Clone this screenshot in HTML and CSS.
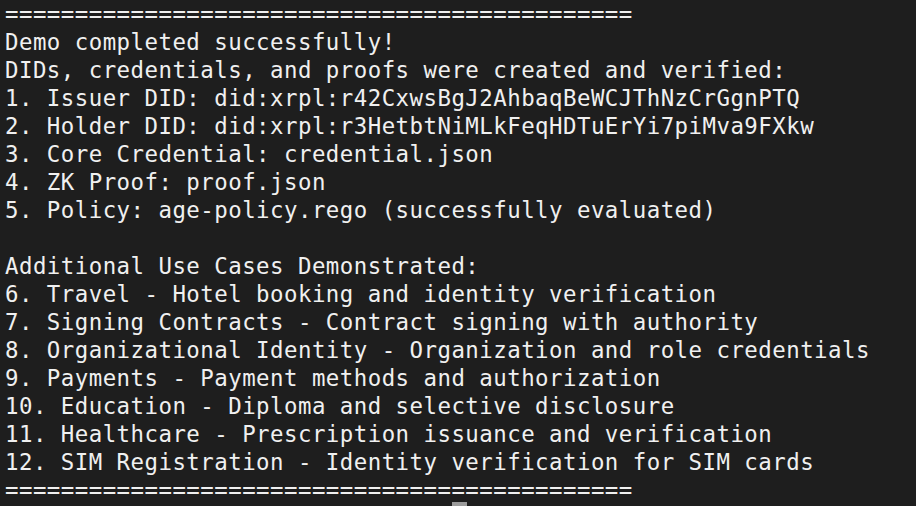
FILE: index.html
```html
<!DOCTYPE html>
<html>
<head>
<meta charset="utf-8">
<link rel="stylesheet" href="styles.css">
</head>
<body>
<pre class="term">=============================================
Demo completed successfully!
DIDs, credentials, and proofs were created and verified:
1. Issuer DID: did:xrpl:r42CxwsBgJ2AhbaqBeWCJThNzCrGgnPTQ
2. Holder DID: did:xrpl:r3HetbtNiMLkFeqHDTuErYi7piMva9FXkw
3. Core Credential: credential.json
4. ZK Proof: proof.json
5. Policy: age-policy.rego (successfully evaluated)

Additional Use Cases Demonstrated:
6. Travel - Hotel booking and identity verification
7. Signing Contracts - Contract signing with authority
8. Organizational Identity - Organization and role credentials
9. Payments - Payment methods and authorization
10. Education - Diploma and selective disclosure
11. Healthcare - Prescription issuance and verification
12. SIM Registration - Identity verification for SIM cards
=============================================</pre>
<div class="cursor-row"><span class="cursor"></span></div>
</body>
</html>
```
FILE: styles.css
```css
html, body {
  margin: 0;
  padding: 0;
  background: #1e1e1e;
  height: 100%;
  overflow: hidden;
}
.term {
  margin: 0;
  padding: 0 0 0 5px;
  font-family: "DejaVu Sans Mono", monospace;
  font-size: 22.4px;
  letter-spacing: 0.47px;
  line-height: 28px;
  color: #f0f0f0;
  white-space: pre;
}
.cursor-row {
  display: flex;
  margin-top: -2px;
  padding-left: 452px;
  height: 4px;
}
.cursor {
  display: block;
  width: 15px;
  height: 4px;
  background: #9b9b9b;
}
```
